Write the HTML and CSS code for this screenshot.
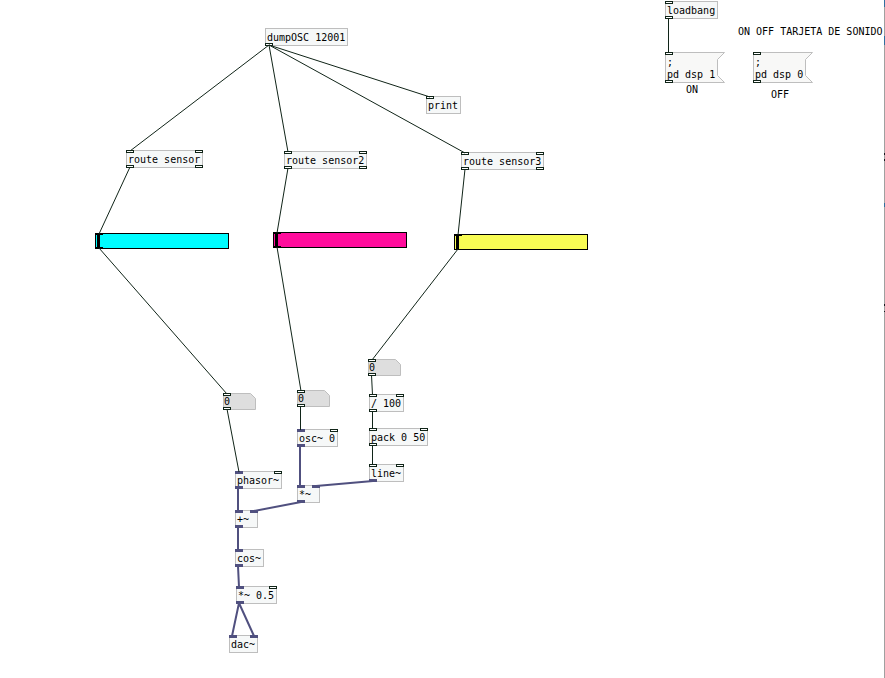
FILE: index.html
```html
<!DOCTYPE html>
<html lang="es">
<head>
<meta charset="utf-8">
<meta name="viewport" content="width=device-width, initial-scale=1">
<title>Patch</title>
<link rel="stylesheet" href="styles.css">
</head>
<body>
<main class="patch">
  <div class="node obj dump">dumpOSC 12001<i class="port out"></i></div>
  <div class="node obj print">print<i class="port"></i></div>
  <div class="node obj route1">route sensor<i class="port"></i><i class="port right"></i><i class="port out"></i><i class="port out right"></i></div>
  <div class="node obj route2">route sensor2<i class="port"></i><i class="port right"></i><i class="port out"></i><i class="port out right"></i></div>
  <div class="node obj route3">route sensor3<i class="port"></i><i class="port right"></i><i class="port out"></i><i class="port out right"></i></div>

  <div class="node slider slider1"><input type="range" min="0" max="127" value="0" aria-label="Sensor 1"></div>
  <div class="node slider slider2"><input type="range" min="0" max="127" value="0" aria-label="Sensor 2"></div>
  <div class="node slider slider3"><input type="range" min="0" max="127" value="0" aria-label="Sensor 3"></div>

  <div class="node num num1">
    <svg class="shape" viewBox="0 0 33 17"><path d="M.5 .5H27.5L32.5 5.5V16.5H.5Z"/></svg>
    <input type="text" value="0" aria-label="Number 1"><i class="port"></i><i class="port out"></i>
  </div>
  <div class="node num num2">
    <svg class="shape" viewBox="0 0 33 17"><path d="M.5 .5H27.5L32.5 5.5V16.5H.5Z"/></svg>
    <input type="text" value="0" aria-label="Number 2"><i class="port"></i><i class="port out"></i>
  </div>
  <div class="node num num3">
    <svg class="shape" viewBox="0 0 33 17"><path d="M.5 .5H27.5L32.5 5.5V16.5H.5Z"/></svg>
    <input type="text" value="0" aria-label="Number 3"><i class="port"></i><i class="port out"></i>
  </div>

  <div class="node obj div100">/ 100<i class="port"></i><i class="port right"></i><i class="port out"></i></div>
  <div class="node obj pack">pack 0 50<i class="port"></i><i class="port right"></i><i class="port out"></i></div>
  <div class="node obj line">line~<i class="port"></i><i class="port right"></i><i class="port out sig"></i></div>
  <div class="node obj osc">osc~ 0<i class="port sig"></i><i class="port right"></i><i class="port out sig"></i></div>
  <div class="node obj mul">*~<i class="port sig"></i><i class="port right sig"></i><i class="port out sig"></i></div>
  <div class="node obj phasor">phasor~<i class="port sig"></i><i class="port right"></i><i class="port out sig"></i></div>
  <div class="node obj add">+~<i class="port sig"></i><i class="port right sig"></i><i class="port out sig"></i></div>
  <div class="node obj cos">cos~<i class="port sig"></i><i class="port out sig"></i></div>
  <div class="node obj gain">*~ 0.5<i class="port sig"></i><i class="port right"></i><i class="port out sig"></i></div>
  <div class="node obj dac">dac~<i class="port sig"></i><i class="port right sig"></i></div>

  <div class="node obj loadbang">loadbang<i class="port"></i><i class="port out"></i></div>
  <button type="button" class="node msg msg1">
    <svg class="shape" viewBox="0 0 60 31"><path d="M.5 .5H59.5L52.5 7.5V23.5L59.5 30.5H.5Z"/></svg>
    <span>;<br>pd dsp 1</span><i class="port"></i><i class="port out"></i>
  </button>
  <button type="button" class="node msg msg2">
    <svg class="shape" viewBox="0 0 60 31"><path d="M.5 .5H59.5L52.5 7.5V23.5L59.5 30.5H.5Z"/></svg>
    <span>;<br>pd dsp 0</span><i class="port"></i><i class="port out"></i>
  </button>
  <p class="node title">ON OFF TARJETA DE SONIDO</p>
  <p class="node on">ON</p>
  <p class="node off">OFF</p>

  <svg class="wires" aria-hidden="true">
    <path class="control" d="M269 45L130 151M269 45L288 152M269 45L465 153M269 45L430 97
      M130 167L99 234M288 168L277 233M465 169L458 235
      M99 248L227 394M277 247L301 391M458 249L372 360
      M227 409L239 472M300.5 406V430M371.500 375L372.500 395M372.500 411V429M372.500 445V465M668.500 18V53"/>
    <path class="signal" d="M300 446V486M373 481L316 486M301 502L254 511M238 488V511M238 527V550M238 566L239 587M239 603L232 636M239 603L254 636"/>
  </svg>

  <svg class="edge" aria-hidden="true">
    <path class="edge-line" d="M.5 0V2000"/>
    <path class="edge-blue" d="M.5 0V7M.5 36V45M.5 203V207"/>
    <path class="edge-dark" d="M.5 153V155M.5 159V161M.5 304V306M.5 311V312"/>
  </svg>
</main>
</body>
</html>
```

FILE: styles.css
```css
* {
  box-sizing: border-box;
}

body {
  margin: 0;
  background: #fff;
}

.patch,
.patch input,
.patch button {
  color: #000;
  font: 10px/12px "DejaVu Sans Mono", monospace;
}

/* Free canvas: every object keeps its own place on it */
.patch {
  position: relative;
  min-height: 100vh;
  overflow: hidden;
}

.node {
  position: absolute;
  margin: 0;
  white-space: nowrap;
}

.obj {
  min-width: 23px;
  padding: 3px 2px 1px 1px;
  border: 1px solid #bebebe;
  background: #f6f8f8;
}

.port {
  position: absolute;
  top: -1px;
  left: -1px;
  width: 8px;
  height: 3px;
  border: 1px solid #102418;
  background: #fff;
}

.port.out {
  top: auto;
  bottom: -1px;
}

.port.right {
  left: auto;
  right: -1px;
}

.port.sig {
  border-color: #50507f;
  background: #50507f;
}

.num .port,
.msg .port {
  left: 0;
  top: 0;
}

.num .port.out,
.msg .port.out {
  top: auto;
  bottom: 0;
}

.shape {
  position: absolute;
  inset: 0;
  width: 100%;
  height: 100%;
  stroke: #bebebe;
}

.num {
  width: 33px;
  height: 17px;
}

.num .shape {
  fill: #dedede;
}

.num input {
  position: relative;
  display: block;
  width: 100%;
  height: 100%;
  padding: 2px 1px 3px;
  border: 0;
  outline: 0;
  background: transparent;
}

.patch .msg {
  width: 60px;
  padding: 5px 2px 2px;
  border: 0;
  background: transparent;
  text-align: left;
}

.msg .shape {
  fill: #f8f8f7;
}

.msg span {
  position: relative;
}

.slider {
  width: 134px;
  height: 16px;
  padding-left: 1px;
  border: 1px solid #000;
}

.slider::before,
.slider::after {
  content: "";
  position: absolute;
  left: 0;
  top: 0;
  width: 7px;
  height: 1px;
  background: #000;
}

.slider::after {
  top: auto;
  bottom: 0;
}

.slider input {
  display: block;
  appearance: none;
  width: 100%;
  height: 100%;
  margin: 0;
  background: transparent;
}

.slider input::-webkit-slider-thumb {
  appearance: none;
  width: 3px;
  height: 14px;
  background: #000;
}

.wires {
  position: absolute;
  inset: 0;
  width: 100%;
  height: 100%;
  fill: none;
  pointer-events: none;
}

.control {
  stroke: #102418;
}

.signal {
  stroke: #50507f;
  stroke-width: 2;
}

.edge {
  position: absolute;
  top: 0;
  right: 0;
  width: 1px;
  height: 100%;
}

.edge-line { stroke: #a0a0a0; }
.edge-blue { stroke: #2f6f9f; }
.edge-dark { stroke: #181820; }

.dump { left: 265px; top: 28px; }
.print { left: 426px; top: 96px; }
.route1 { left: 126px; top: 150px; }
.route2 { left: 284px; top: 151px; }
.route3 { left: 461px; top: 152px; }
.slider1 { left: 95px; top: 233px; background: #00fcff; }
.slider2 { left: 273px; top: 232px; background: #ff0c9c; }
.slider3 { left: 454px; top: 234px; background: #f8fc54; }
.slider3::after { display: none; }
.num1 { left: 223px; top: 393px; }
.num2 { left: 297px; top: 390px; }
.num3 { left: 368px; top: 359px; }
.div100 { left: 369px; top: 394px; }
.pack { left: 369px; top: 428px; }
.line { left: 369px; top: 464px; }
.osc { left: 297px; top: 429px; }
.mul { left: 297px; top: 485px; }
.phasor { left: 235px; top: 471px; }
.add { left: 235px; top: 510px; }
.cos { left: 235px; top: 549px; }
.gain { left: 236px; top: 586px; }
.dac { left: 229px; top: 635px; }
.loadbang { left: 665px; top: 1px; }
.msg1 { left: 665px; top: 52px; }
.msg2 { left: 753px; top: 52px; }
.title { left: 738px; top: 26px; }
.on { left: 686px; top: 84px; }
.off { left: 771px; top: 89px; }
```
